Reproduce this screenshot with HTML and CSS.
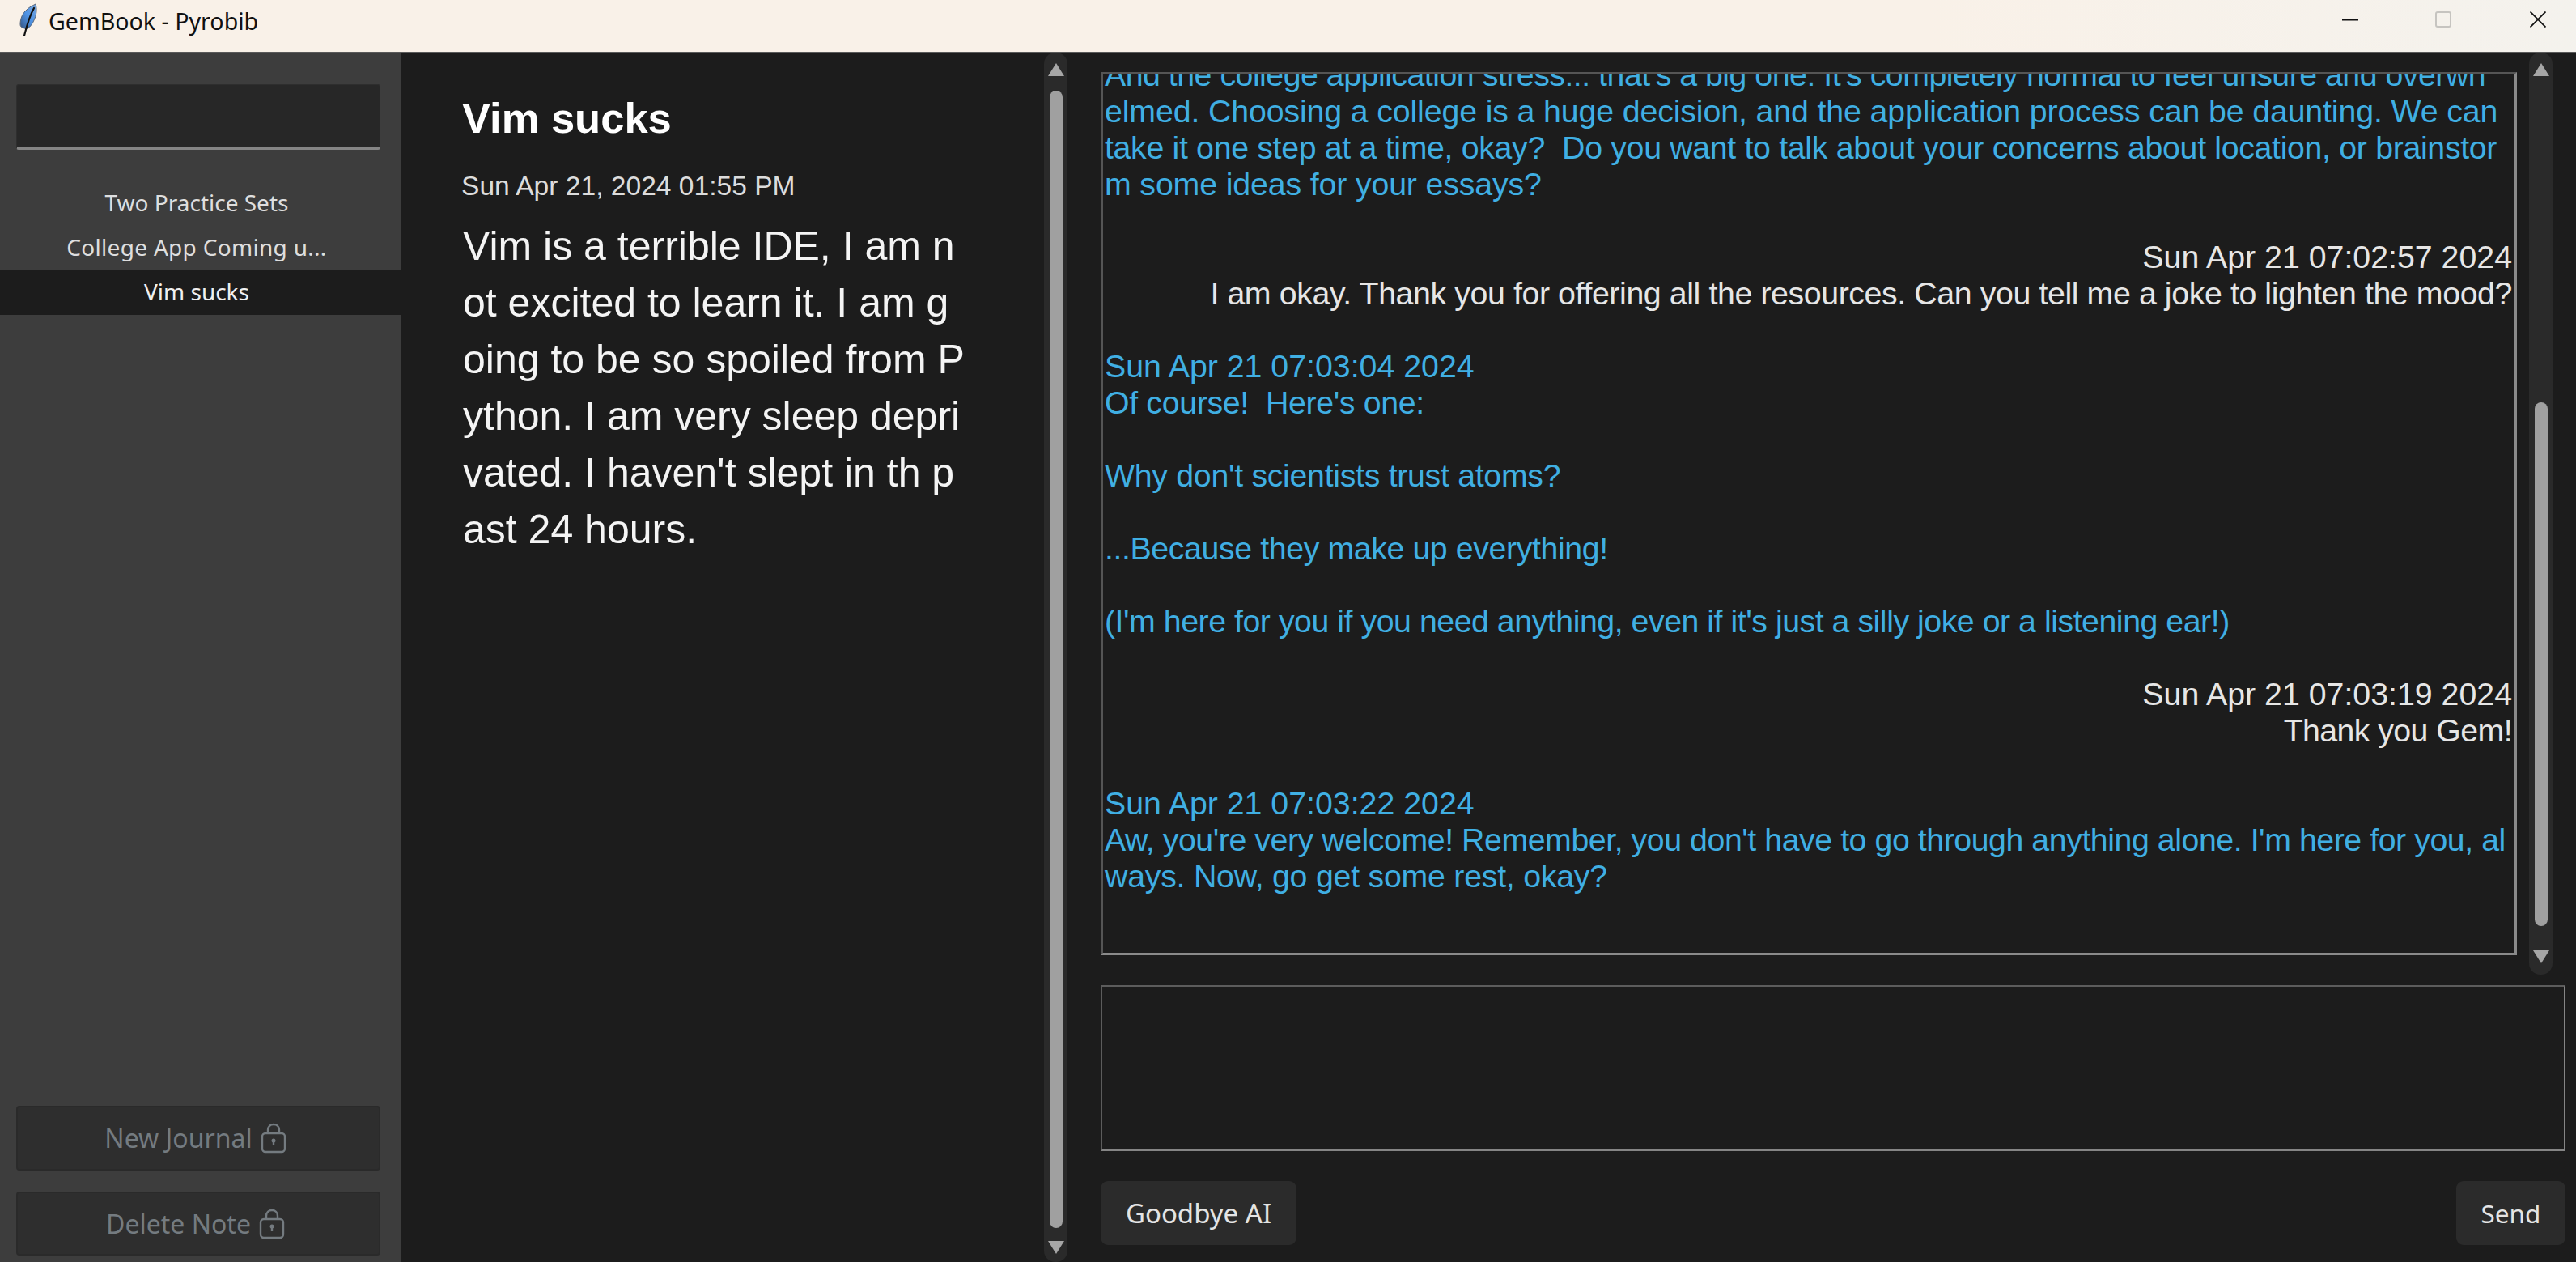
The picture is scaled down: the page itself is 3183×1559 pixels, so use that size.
FILE: index.html
```html
<!DOCTYPE html>
<html lang="en">
<head>
<meta charset="utf-8">
<title>GemBook - Pyrobib</title>
<link rel="stylesheet" href="styles.css">
</head>
<body>
<header class="titlebar">
  <svg class="app-icon" width="26" height="42" viewBox="0 0 26 42" aria-hidden="true">
    <defs><linearGradient id="fg" x1="0" y1="1" x2="1" y2="0"><stop offset="0" stop-color="#33527f"/><stop offset=".5" stop-color="#4f94e6"/><stop offset="1" stop-color="#7aa5d8"/></linearGradient></defs>
    <path d="M21 1C23 7 22 15 19 21C17 26 14 30 9 32C7 30 2 31 2 26C2 19 5 12 10 8C13 5 17 3 21 1Z" fill="url(#fg)" stroke="#59677a" stroke-width="1"/>
    <path d="M19 6C15 13 11 24 7 40" fill="none" stroke="#111" stroke-width="2.2" stroke-linecap="round"/>
  </svg>
  <span class="app-title">GemBook - Pyrobib</span>
  <div class="win-controls">
    <svg class="win-btn" width="20" height="20" viewBox="0 0 20 20" aria-hidden="true"><path d="M0 10.5H20" stroke="#111" stroke-width="2"/></svg>
    <svg class="win-btn" width="20" height="20" viewBox="0 0 20 20" aria-hidden="true"><rect x="1" y="1" width="18" height="18" rx="2" fill="none" stroke="#c6c4c0" stroke-width="2"/></svg>
    <svg class="win-btn win-close" width="20" height="20" viewBox="0 0 20 20" aria-hidden="true"><path d="M0.5 0.5L19.5 19.5M19.5 0.5L0.5 19.5" stroke="#111" stroke-width="1.8"/></svg>
  </div>
</header>
<main class="app">
  <aside class="sidebar">
    <div class="search"></div>
    <ul class="note-list">
      <li class="note-item">Two Practice Sets</li>
      <li class="note-item wide">College App Coming u...</li>
      <li class="note-item selected">Vim sucks</li>
    </ul>
    <div class="side-actions">
      <button class="locked-btn">New Journal
        <svg class="lock" width="32" height="38" viewBox="0 0 32 38" aria-hidden="true"><rect x="2" y="13" width="28" height="23" rx="4" fill="none" stroke="currentColor" stroke-width="2.4"/><path d="M9 13V9C9 4.500 12 2 16 2C20 2 23 4.500 23 9V13" fill="none" stroke="currentColor" stroke-width="2.4"/><circle cx="16" cy="22" r="2.500" fill="currentColor"/><rect x="14.800" y="22" width="2.400" height="6" fill="currentColor"/></svg>
      </button>
      <button class="locked-btn">Delete Note
        <svg class="lock" width="32" height="38" viewBox="0 0 32 38" aria-hidden="true"><rect x="2" y="13" width="28" height="23" rx="4" fill="none" stroke="currentColor" stroke-width="2.4"/><path d="M9 13V9C9 4.500 12 2 16 2C20 2 23 4.500 23 9V13" fill="none" stroke="currentColor" stroke-width="2.4"/><circle cx="16" cy="22" r="2.500" fill="currentColor"/><rect x="14.800" y="22" width="2.400" height="6" fill="currentColor"/></svg>
      </button>
    </div>
  </aside>

  <section class="note">
    <h1 class="note-title">Vim sucks</h1>
    <p class="note-date">Sun Apr 21, 2024 01:55 PM</p>
    <p class="note-body">Vim is a terrible IDE, I am n
ot excited to learn it. I am g
oing to be so spoiled from P
ython. I am very sleep depri
vated. I haven't slept in th p
ast 24 hours.</p>
  </section>

  <div class="scrollbar scrollbar-note">
    <span class="arrow up"></span>
    <span class="thumb thumb-note"></span>
    <span class="arrow down"></span>
  </div>

  <section class="chat">
    <div class="chat-top">
      <div class="log">
        <div class="log-content">
          <p class="ai">
            <span class="line k50">And the college application stress... that's a big one. It's completely normal to feel unsure and overwh</span>
            <span class="line k13">elmed. Choosing a college is a huge decision, and the application process can be daunting. We can</span>
            <span class="line k33">take it one step at a time, okay?  Do you want to talk about your concerns about location, or brainstor</span>
            <span class="line k14">m some ideas for your essays?</span>
          </p>
          <p class="user">
            <span class="line">Sun Apr 21 07:02:57 2024</span>
            <span class="line k40">I am okay. Thank you for offering all the resources. Can you tell me a joke to lighten the mood?</span>
          </p>
          <p class="ai">
            <span class="line">Sun Apr 21 07:03:04 2024</span>
            <span class="line k35">Of course!  Here's one:</span>
            <span class="line blank"></span>
            <span class="line k30">Why don't scientists trust atoms?</span>
            <span class="line blank"></span>
            <span class="line k40">...Because they make up everything!</span>
            <span class="line blank"></span>
            <span class="line k47">(I'm here for you if you need anything, even if it's just a silly joke or a listening ear!)</span>
          </p>
          <p class="user">
            <span class="line">Sun Apr 21 07:03:19 2024</span>
            <span class="line k58">Thank you Gem!</span>
          </p>
          <p class="ai">
            <span class="line">Sun Apr 21 07:03:22 2024</span>
            <span class="line k45">Aw, you're very welcome! Remember, you don't have to go through anything alone. I'm here for you, al</span>
            <span class="line k24">ways. Now, go get some rest, okay?</span>
          </p>
        </div>
      </div>
      <div class="scrollbar scrollbar-chat">
        <span class="arrow up"></span>
        <span class="thumb thumb-chat"></span>
        <span class="arrow down"></span>
      </div>
    </div>
    <div class="composer"></div>
    <div class="chat-actions">
      <button class="action goodbye">Goodbye AI</button>
      <button class="action send">Send</button>
    </div>
  </section>
</main>
</body>
</html>
```
FILE: styles.css
```css
* { box-sizing: border-box; }
html, body { margin: 0; height: 100%; }
body {
  width: 3183px;
  height: 1559px;
  overflow: hidden;
  background: #1c1c1c;
  font-family: "Liberation Sans", Arial, sans-serif;
  display: flex;
  flex-direction: column;
}

/* Title bar */
.titlebar {
  flex: 0 0 65px;
  display: flex;
  align-items: flex-start;
  background: linear-gradient(90deg, #f9f1e8 0%, #f9f1e8 75%, #f4f2ed 100%);
  border-bottom: 1px solid #5a5a5a;
}
.app-icon { margin: 4px 0 0 23px; flex: none; }
.app-title {
  margin: 5px 0 0 11px;
  font: 400 28.6px/42px "Noto Sans", sans-serif;
  color: #111;
}
.win-controls {
  margin-left: auto;
  margin-top: 14px;
  margin-right: 37px;
  display: flex;
  gap: 95px;
}
.win-btn { display: block; flex: none; }
.win-close { margin-left: 2px; }

/* Main */
.app { flex: 1; min-height: 0; display: flex; }

/* Sidebar */
.sidebar {
  flex: 0 0 495px;
  background: #3d3d3d;
  display: flex;
  flex-direction: column;
  padding-top: 39px;
}
.search {
  flex: 0 0 81px;
  margin: 0 25px 0 20px;
  background: #272727;
  border: 1px solid #2e2e2e;
  border-bottom: 3px solid #858585;
  border-radius: 3px;
}
.note-list {
  list-style: none;
  margin: 39px 0 0;
  padding: 0;
  flex: 1;
}
.note-item {
  height: 55px;
  padding-right: 9px;
  text-align: center;
  font: 400 28px/53px "Noto Sans", sans-serif;
  color: #dedede;
}
.note-item.wide { letter-spacing: .3px; }
.note-item.selected { background: #1c1c1c; color: #f0f0f0; }
.side-actions {
  margin: 0 25px 8px 20px;
  display: flex;
  flex-direction: column;
  gap: 26px;
}
.locked-btn {
  height: 79px;
  background: #2e2e2e;
  border: 2px solid #2a2a2a;
  border-radius: 4px;
  color: #747b80;
  font: 400 32px/1 "Noto Sans", sans-serif;
  display: flex;
  align-items: center;
  justify-content: center;
  gap: 10px;
  padding: 0 7px 0 0;
}
.locked-btn:first-child { height: 80px; }
.lock { flex: none; display: block; }

/* Note pane */
.note {
  flex: 0 0 795px;
  padding: 51px 0 0 76px;
  color: #fff;
}
.note-title {
  margin: 0;
  font: 700 52.500px/60px "Liberation Sans", Arial, sans-serif;
}
.note-date {
  margin: 33px 0 0 -1px;
  font: 400 33.6px/42px "Liberation Sans", Arial, sans-serif;
  color: #dcdcdc;
}
.note-body {
  margin: 18px 0 0 1px;
  font: 400 50px/70px "Liberation Sans", Arial, sans-serif;
  color: #f4f4f4;
  white-space: pre;
}

/* Scrollbars */
.scrollbar {
  flex: 0 0 29px;
  background: #2a2a2a;
  border-radius: 14px;
  display: flex;
  flex-direction: column;
  align-items: center;
  padding: 13px 0 14px;
}
.scrollbar-note { padding-bottom: 10px; }
.arrow {
  flex: none;
  width: 0;
  height: 0;
  border-left: 10.500px solid transparent;
  border-right: 10.500px solid transparent;
}
.arrow.up { border-bottom: 16px solid #a6a6a6; }
.arrow.down { border-top: 16px solid #a6a6a6; margin-top: auto; }
.thumb {
  width: 16px;
  background: #a0a0a0;
  border-radius: 8px;
  flex: none;
}
.thumb-note { margin-top: 18px; height: 1405px; }
.thumb-chat { margin-top: 403px; height: 647px; }

/* Chat */
.chat {
  flex: 1;
  min-width: 0;
  padding: 0 13px 21px 41px;
  display: flex;
  flex-direction: column;
}
.chat-top {
  flex: 0 0 1139px;
  display: flex;
  align-items: flex-start;
  gap: 15px;
}
.log {
  flex: 0 0 1750px;
  height: 1091px;
  margin-top: 24px;
  border: 3px solid #8a8a8a;
  border-top-color: #555;
  border-left-color: #555;
  overflow: hidden;
}
.log-content {
  margin-top: -22px;
  padding: 0 3px 0 2px;
  font: 400 39.3px/45px "Liberation Sans", Arial, sans-serif;
}
.log-content p { margin: 0 0 45px; }
.line { display: block; white-space: pre; }
.blank { height: 45px; }
.k13 { letter-spacing: -.13px; }
.k14 { letter-spacing: -.14px; }
.k24 { letter-spacing: -.24px; }
.k30 { letter-spacing: -.3px; }
.k33 { letter-spacing: -.33px; }
.k35 { letter-spacing: -.35px; }
.k40 { letter-spacing: -.4px; }
.k45 { letter-spacing: -.45px; }
.k47 { letter-spacing: -.47px; }
.k50 { letter-spacing: -.5px; }
.k58 { letter-spacing: -.58px; }
.ai { color: #40afe3; }
.user { color: #e6e6e6; text-align: right; }
.scrollbar-chat { height: 1139px; }

.composer {
  flex: 0 0 205px;
  margin-top: 13px;
  border: 2px solid #858585;
  border-top-color: #5c5c5c;
  border-left-color: #5c5c5c;
}
.chat-actions {
  margin-top: 37px;
  display: flex;
  justify-content: space-between;
}
.action {
  height: 79px;
  background: #2b2b2b;
  border: 0;
  border-radius: 9px;
  color: #e4e4e4;
  font: 400 31.5px/1 "Noto Sans", sans-serif;
  padding: 0;
}
.goodbye { width: 242px; font-size: 33px; }
.send { width: 135px; }
```
